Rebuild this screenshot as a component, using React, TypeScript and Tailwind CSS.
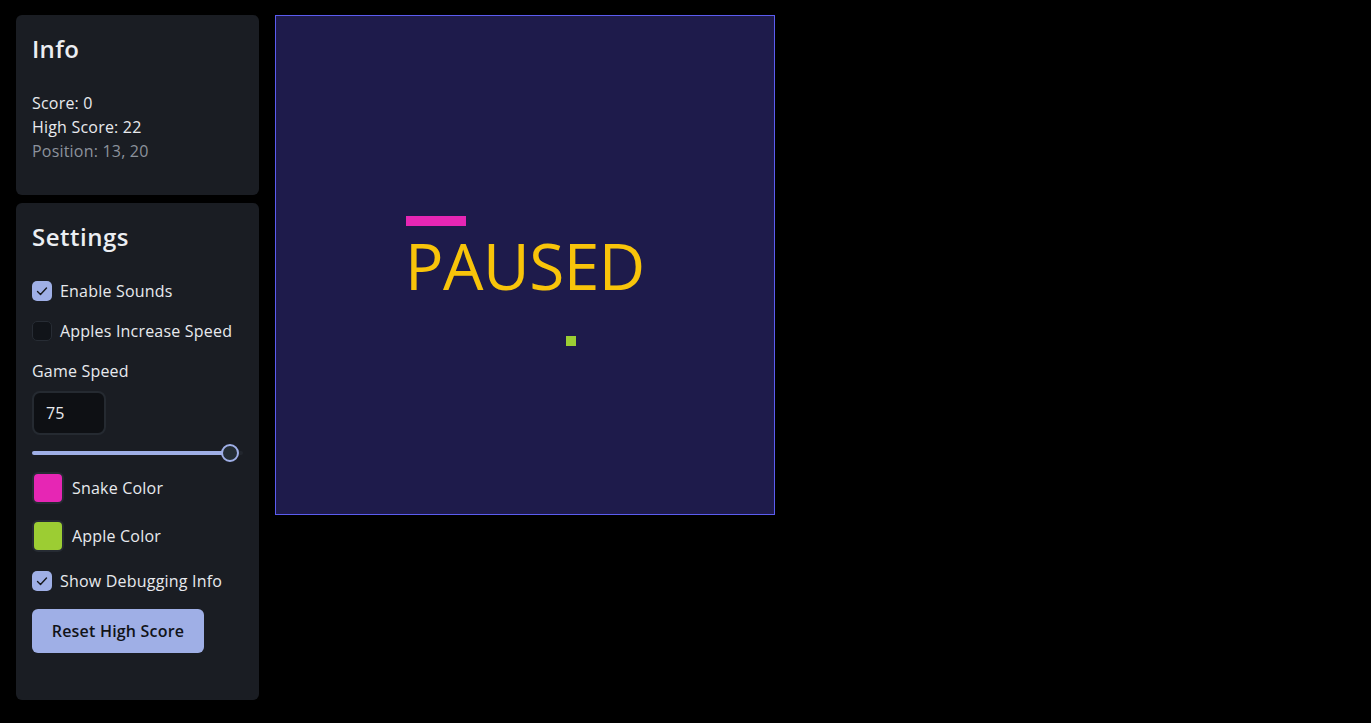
import { useState } from "react";

const FONT = { fontFamily: '"Open Sans", "Noto Sans", sans-serif' };

function Checkbox({ checked }: { checked: boolean }) {
  return checked ? (
    <span className="w-5 h-5 rounded-[5px] bg-[#9fafe6] flex items-center justify-center shrink-0">
      <svg width="16" height="16" viewBox="0 0 16 16" fill="none">
        <path d="M3.5 8.5l3 3L12.5 5" stroke="#16181d" strokeWidth="1.4" strokeLinecap="round" strokeLinejoin="round" />
      </svg>
    </span>
  ) : (
    <span className="w-5 h-5 rounded-[5px] bg-[#111419] border border-[#272c34] shrink-0" />
  );
}

const snake = [13, 14, 15, 16, 17, 18];

export default function App() {
  const [sounds] = useState(true);
  const [speed] = useState(75);

  return (
    <div className="min-h-screen bg-black text-[#e8eaee] flex items-start gap-4 pl-4 pt-[15px]" style={FONT}>
      <div className="w-[243px] flex flex-col gap-2">
        {/* info */}
        <div className="bg-[#1a1d23] rounded-md px-4 pt-[18px] h-[180px]">
          <h2 className="text-2xl font-semibold leading-8 text-[#eceef2] tracking-[0.3px]">Info</h2>
          <div className="mt-[26px] text-base leading-6 tracking-[0.2px]">
            <p>Score: 0</p>
            <p>High Score: 22</p>
            <p className="text-[#8c929c]">Position: 13, 20</p>
          </div>
        </div>

        {/* settings */}
        <div className="bg-[#1a1d23] rounded-md px-4 pt-[18px] h-[497px] text-base tracking-[0.2px]">
          <h2 className="text-2xl font-semibold leading-8 text-[#eceef2] tracking-[0.5px]">Settings</h2>

          <label className="mt-[26px] flex items-center gap-2 h-6">
            <Checkbox checked={sounds} />
            <span>Enable Sounds</span>
          </label>
          <label className="mt-4 flex items-center gap-2 h-6">
            <Checkbox checked={false} />
            <span className="whitespace-nowrap">Apples Increase Speed</span>
          </label>

          <p className="mt-4 leading-6">Game Speed</p>
          <div className="mt-2 w-[74px] h-11 rounded-lg bg-[#0e1014] border-2 border-[#252a31] flex items-center pl-3">
            {speed}
          </div>

          <div className="mt-[10px] h-4 relative flex items-center">
            <div className="h-1 w-[198px] bg-[#9fafe6] rounded-l-full" />
            <div className="h-1 flex-1 bg-[#22262d] rounded-r-full" />
            <span className="absolute left-[189px] top-[-1px] w-[18px] h-[18px] rounded-full bg-[#252e36] border-2 border-[#9fafe6]" />
          </div>

          <div className="mt-[11px] flex items-center gap-2 h-8">
            <span className="w-8 h-8 rounded-md border-2 border-[#262b33] bg-[#e626b4]" />
            <span>Snake Color</span>
          </div>
          <div className="mt-4 flex items-center gap-2 h-8">
            <span className="w-8 h-8 rounded-md border-2 border-[#262b33] bg-[#9ccd33]" />
            <span>Apple Color</span>
          </div>

          <label className="mt-[17px] flex items-center gap-2 h-6">
            <Checkbox checked={true} />
            <span>Show Debugging Info</span>
          </label>

          <button className="mt-4 w-[172px] h-11 rounded-md bg-[#9fafe6] text-[#111318] font-semibold">
            Reset High Score
          </button>
        </div>
      </div>

      {/* board */}
      <div className="w-[500px] h-[500px] bg-[#1e1b4b] border border-[#5b5cf0] relative overflow-hidden">
        {snake.map((x) => (
          <span
            key={x}
            className="absolute w-[10px] h-[10px] bg-[#e626b4]"
            style={{ left: x * 10, top: 20 * 10 }}
          />
        ))}
        <span className="absolute w-[10px] h-[10px] bg-[#9ccd33]" style={{ left: 290, top: 320 }} />
        <span className="absolute left-[129px] top-[202px] text-[64px] leading-[96px] font-normal text-[#f8c40a] tracking-[-0.5px]">
          PAUSED
        </span>
      </div>
    </div>
  );
}
